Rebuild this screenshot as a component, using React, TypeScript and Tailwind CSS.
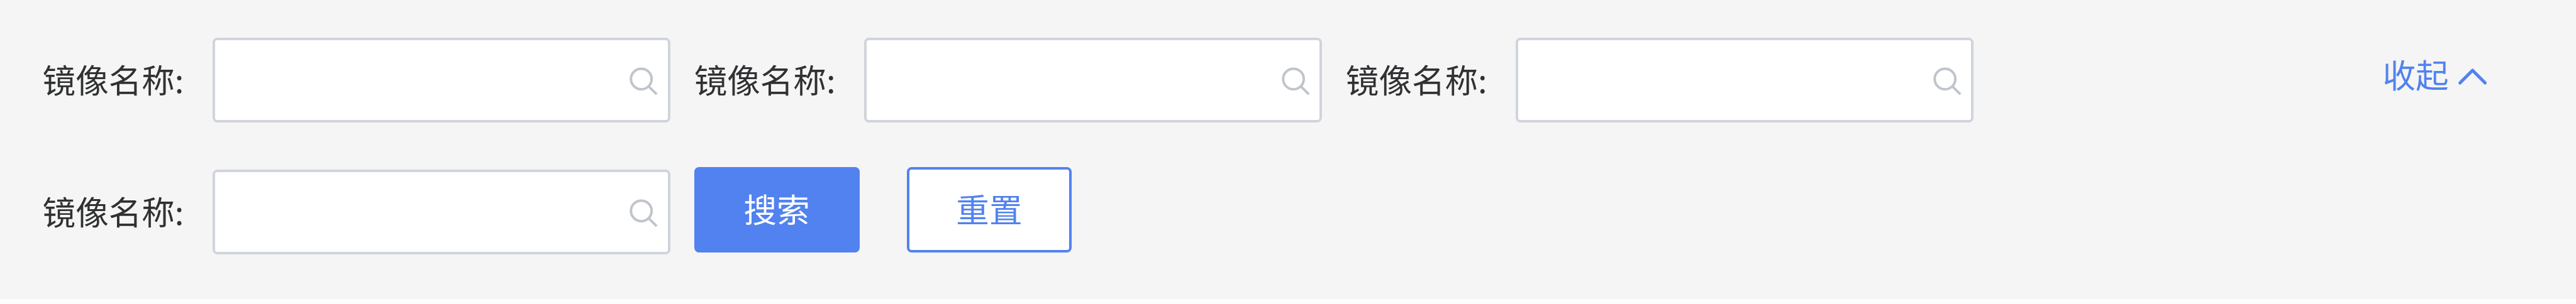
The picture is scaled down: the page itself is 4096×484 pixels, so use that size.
function SearchIcon() {
  return (
    <svg className="h-[60px] w-[60px] shrink-0" viewBox="0 0 60 60" fill="none" stroke="#c0c4cc" strokeWidth="4">
      <circle cx="24.7" cy="27.8" r="16.4" />
      <path d="M36 39.1 L49.2 52.2" />
    </svg>
  );
}

function Field() {
  return (
    <div className="flex h-[135px] items-center">
      <span className="w-[270.3px] shrink-0 whitespace-nowrap pb-[6px] text-[#303133]">镜像名称:</span>
      <div className="flex h-[135px] w-[728.3px] items-center justify-end rounded-[7.5px] border-4 border-[#d0d4dc] bg-white pr-[6.8px]">
        <SearchIcon />
      </div>
    </div>
  );
}

export default function App() {
  return (
    <div className="h-[484px] w-[4096px] overflow-hidden bg-[#fafcfe] font-['Noto_Sans_CJK_SC',sans-serif] text-[52.56px] leading-[76px]">
      <div className="flex h-[476px] items-start justify-between bg-[#f5f5f5] pl-[67.6px] pr-[137.5px] pt-[60px]">
        <div className="flex flex-col gap-[75px]">
          <div className="flex gap-[37.54px]">
            <Field />
            <Field />
            <Field />
          </div>
          <div className="flex items-start">
            <Field />
            <div className="-mt-1 ml-[37.54px] flex gap-[75px]">
              <button className="h-[136px] w-[262.8px] rounded-[7.5px] bg-[#5182ef] pb-[6px] text-white">搜索</button>
              <button className="h-[136px] w-[262.8px] rounded-[7.5px] border-4 border-[#5182ef] bg-white pb-[6px] text-[#5182ef]">重置</button>
            </div>
          </div>
        </div>
        <button className="mt-[19px] flex items-center text-[#5182ef]">
          <span>收起</span>
          <svg className="ml-[9px] h-[50px] w-[56px]" viewBox="0 0 56 50" fill="none" stroke="currentColor" strokeWidth="5" strokeLinecap="round" strokeLinejoin="round">
            <path d="M8.5 40 L28.5 20 L48.5 40" />
          </svg>
        </button>
      </div>
    </div>
  );
}
